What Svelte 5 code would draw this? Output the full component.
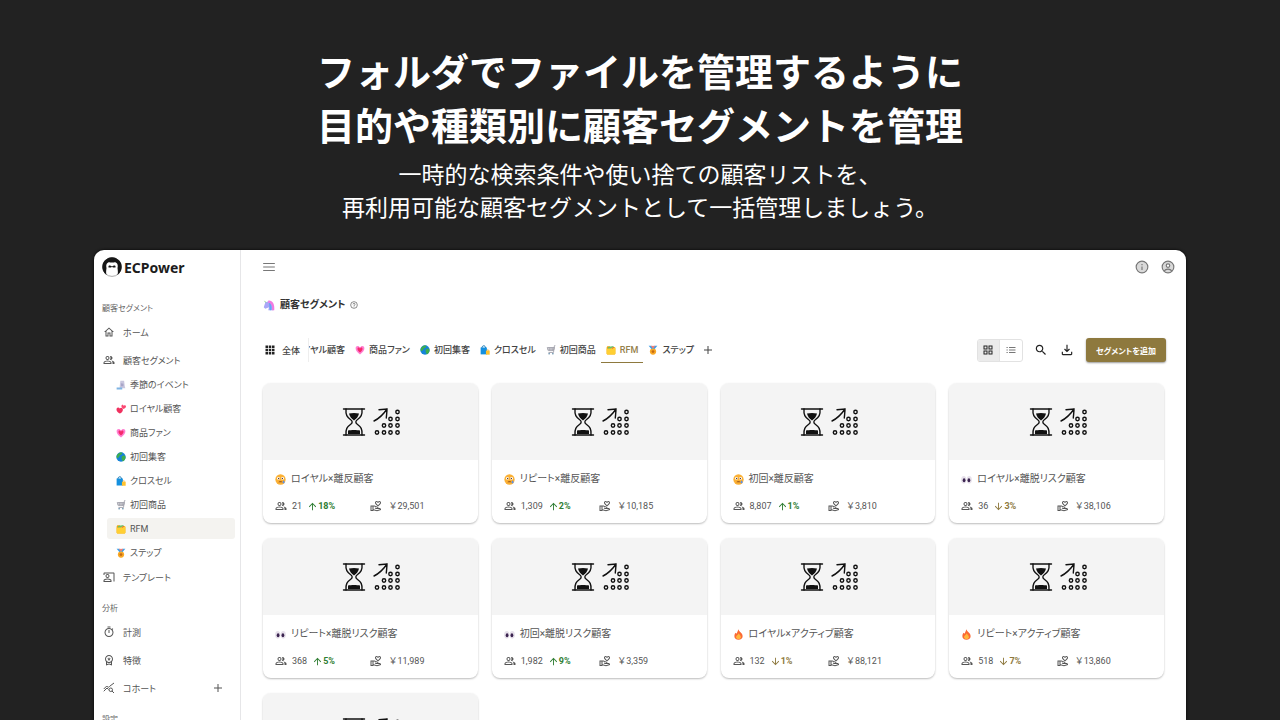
<script>
  const subs = [
    ['boot', '季節のイベント'],
    ['hearts', 'ロイヤル顧客'],
    ['heart', '商品ファン'],
    ['globe', '初回集客'],
    ['bags', 'クロスセル'],
    ['cart', '初回商品'],
    ['folder', 'RFM'],
    ['medal', 'ステップ'],
  ];
  const tabs = subs.slice(1);

  const cards = [
    { emoji: 'face', title: 'ロイヤル×離反顧客', count: '21', up: true, pct: '18%', value: '29,501' },
    { emoji: 'face', title: 'リピート×離反顧客', count: '1,309', up: true, pct: '2%', value: '10,185' },
    { emoji: 'face', title: '初回×離反顧客', count: '8,807', up: true, pct: '1%', value: '3,810' },
    { emoji: 'eyes', title: 'ロイヤル×離脱リスク顧客', count: '36', up: false, pct: '3%', value: '38,106' },
    { emoji: 'eyes', title: 'リピート×離脱リスク顧客', count: '368', up: true, pct: '5%', value: '11,989' },
    { emoji: 'eyes', title: '初回×離脱リスク顧客', count: '1,982', up: true, pct: '9%', value: '3,359' },
    { emoji: 'fire', title: 'ロイヤル×アクティブ顧客', count: '132', up: false, pct: '1%', value: '88,121' },
    { emoji: 'fire', title: 'リピート×アクティブ顧客', count: '518', up: false, pct: '7%', value: '13,860' },
    {},
  ];

  const dots = [
    [54.5, 4], [47.5, 11], [54.5, 11],
    [41, 17.5], [47.5, 17.5], [54.5, 17.5],
    [34, 24.5], [41, 24.5], [47.5, 24.5], [54.5, 24.5],
  ];

  const paths = {
    home: 'M12 3 2 12h3v9h6v-6h2v6h6v-9h3L12 3zm5 16h-2v-6H9v6H7v-8.8l5-4.5 5 4.5V19z',
    people: 'M16.67 13.13C18.04 14.06 19 15.32 19 17v3h4v-3c0-2.18-3.57-3.47-6.33-3.87zM15 12c2.21 0 4-1.79 4-4s-1.79-4-4-4c-.47 0-.91.1-1.33.24C14.5 5.27 15 6.58 15 8s-.5 2.73-1.33 3.76c.42.14.86.24 1.33.24zM9 12c2.21 0 4-1.79 4-4s-1.79-4-4-4-4 1.79-4 4 1.79 4 4 4zm0-6c1.1 0 2 .9 2 2s-.9 2-2 2-2-.9-2-2 .9-2 2-2zM9 13c-2.67 0-8 1.34-8 4v3h16v-3c0-2.66-5.33-4-8-4zm6 5H3v-.99C3.2 16.29 6.3 15 9 15s5.8 1.29 6 2v1z',
    present: 'M21 3H3c-1.100 0-2 .9-2 2v3h2V5h18v16h2V5c0-1.100-.9-2-2-2zM9 14c2.210 0 4-1.790 4-4s-1.790-4-4-4-4 1.790-4 4 1.790 4 4 4zm0-6c1.100 0 2 .9 2 2s-.9 2-2 2-2-.9-2-2 .9-2 2-2zm6.390 8.560C13.710 15.700 11.530 15 9 15s-4.710.7-6.390 1.560C1.610 17.070 1 18.100 1 19.220V22h16v-2.780c0-1.120-.61-2.150-1.610-2.660zM15 20H3v-.78c0-.38.2-.72.520-.88C4.710 17.730 6.630 17 9 17s4.290.73 5.480 1.340c.32.16.52.5.52.880V20z',
    timer: 'M9 1h6v2H9V1zm10.030 6.390 1.420-1.420c-.43-.51-.9-.99-1.410-1.410l-1.420 1.420C16.070 4.740 14.120 4 12 4c-4.970 0-9 4.030-9 9s4.020 9 9 9 9-4.030 9-9c0-2.120-.74-4.070-1.970-5.610zM12 20c-3.870 0-7-3.130-7-7s3.130-7 7-7 7 3.130 7 7-3.130 7-7 7zM11 14h2V8h-2v6z',
    premium: 'M9.680 13.690 12 11.930l2.310 1.760-.88-2.850L15.750 9h-2.840L12 6.190 11.090 9H8.250l2.310 1.840-.88 2.850zM20 10c0-4.420-3.580-8-8-8s-8 3.580-8 8c0 2.030.76 3.870 2 5.280V23l6-2 6 2v-7.720c1.240-1.410 2-3.250 2-5.280zm-8-6c3.310 0 6 2.690 6 6s-2.690 6-6 6-6-2.690-6-6 2.690-6 6-6zm0 15-4 1.020v-3.100c1.180.69 2.540 1.080 4 1.080s2.820-.39 4-1.080v3.100L12 19z',
    hand: 'M16 13c3.090-2.810 6-5.440 6-7.700C22 3.450 20.550 2 18.700 2c-1.040 0-2.050.49-2.700 1.250C15.340 2.490 14.340 2 13.300 2 11.450 2 10 3.450 10 5.300c0 2.260 2.910 4.890 6 7.700zm-2.700-9c.44 0 .89.21 1.180.55L16 6.340l1.520-1.790c.29-.34.74-.55 1.180-.55.74 0 1.300.56 1.300 1.300 0 1.120-2.040 3.170-4 4.990-1.960-1.820-4-3.880-4-4.990 0-.74.56-1.300 1.300-1.300zM19 16h-2c0-1.200-.75-2.280-1.870-2.700L8.970 11H1v11h6v-1.440l7 1.940 8-2.500v-1c0-1.660-1.340-3-3-3zM3 20v-7h2v7H3zm10.970.41L7 18.480V13h1.610l5.820 2.170c.34.13.57.46.57.83 0 0-1.990-.05-2.300-.15l-2.380-.79-.63 1.900 2.380.79c.51.17 1.040.26 1.580.26H19c.39 0 .74.23.9.56l-5.930 1.840z',
    apps: 'M3 3h5v5H3zM9.500 3h5v5h-5zM16 3h5v5h-5zM3 9.500h5v5H3zM9.500 9.500h5v5h-5zM16 9.500h5v5h-5zM3 16h5v5H3zM9.500 16h5v5h-5zM16 16h5v5h-5z',
    grid: 'M3 3v8h8V3H3zm6 6H5V5h4v4zm-6 4v8h8v-8H3zm6 6H5v-4h4v4zm4-16v8h8V3h-8zm6 6h-4V5h4v4zm-6 4v8h8v-8h-8zm6 6h-4v-4h4v4z',
    list: 'M3 6h2.500v2H3zM8 6h13v2H8zM3 11h2.500v2H3zM8 11h13v2H8zM3 16h2.500v2H3zM8 16h13v2H8z',
    search: 'M15.500 14h-.79l-.28-.27C15.410 12.590 16 11.110 16 9.500 16 5.910 13.090 3 9.500 3S3 5.910 3 9.500 5.910 16 9.500 16c1.610 0 3.090-.59 4.230-1.570l.27.28v.79l5 4.990L20.490 19l-4.990-5zm-6 0C7.010 14 5 11.990 5 9.500S7.010 5 9.500 5 14 7.010 14 9.500 11.990 14 9.500 14z',
    download: 'M19 15v4H5v-4H3v4c0 1.100.9 2 2 2h14c1.100 0 2-.9 2-2v-4h-2zM17 11l-1.410-1.410L13 12.170V3h-2v9.170L8.410 9.590 7 11l5 5 5-5z',
    up: 'm4 12 1.410 1.410L11 7.830V20h2V7.830l5.580 5.590L20 12l-8-8-8 8z',
    down: 'm20 12-1.410-1.410L13 16.170V4h-2v12.170l-5.580-5.590L4 12l8 8 8-8z',
    add: 'M20 13h-7v7h-2v-7H4v-2h7V4h2v7h7v2z',
    menu: 'M2 5h20v2H2zM2 11h20v2H2zM2 17h20v2H2z',
  };
</script>

{#snippet icon(name)}
  <svg class="icon" viewBox="0 0 24 24" aria-hidden="true"><path d={paths[name]} /></svg>
{/snippet}

{#snippet emoji(name)}
  <svg class="emoji" viewBox="0 0 16 16" aria-hidden="true">
    {#if name === 'boot'}
      <path d="M7 1h6l1 9 1 3H6V9z" fill="#c9c6de" />
      <path d="M8 5l4 1v4H8z" fill="#a9a5c8" />
      <path d="M1 12h9v3H1z" fill="#7fb4e3" />
    {:else if name === 'hearts'}
      <path d="M6 15C2 13 0 10 1 7c1-2 4-2 5 0 2-2 5-1 5 2 0 3-2 5-5 6z" fill="#f0315f" />
      <path d="M12 8C9 6 8 4 9 2c1-1 3-1 3 1 1-2 4-1 4 1 0 2-2 3-4 4z" fill="#fb4772" />
    {:else if name === 'heart'}
      <path d="M8 15C3 11 1 8 1 5c0-4 5-5 7-1 2-4 7-3 7 1 0 3-2 6-7 10z" fill="#ff7fd1" />
      <path d="M8 12C5 9.500 4 8 4 6c0-2 3-3 4 0 1-3 4-2 4 0 0 2-1 3.500-4 6z" fill="#f52a6a" />
    {:else if name === 'globe'}
      <circle cx="8" cy="8" r="7.500" fill="#1583d8" />
      <path d="M3 3c2-2 5-3 7-2l-1 3-3 1-1 3-3 2C0 8 1 5 3 3zM9 7l4-2 2 2c1 3-1 6-4 8l-2-4z" fill="#3fae4b" />
    {:else if name === 'bags'}
      <path d="M3 5c0-5 6-5 6 0" fill="none" stroke="#0a6fae" stroke-width="1.500" />
      <path d="M1 4h10v11H1z" fill="#1490df" />
      <path d="M9.500 9h6v6.500h-6z" fill="#ffc22e" />
      <path d="M11 9c0-2 3-2 3 0" fill="none" stroke="#e89a18" />
    {:else if name === 'cart'}
      <path d="M15 1h-1.500L12 12H4M2 4h11.500L12 9H3.500zM5 4l.5 5M8 4v5M11 4l-.5 5M2.500 6.500H13" fill="none" stroke="#9b9ba6" stroke-width="1.300" />
      <circle cx="5" cy="14" r="1.300" fill="#5b86a5" /><circle cx="11" cy="14" r="1.300" fill="#5b86a5" />
    {:else if name === 'folder'}
      <path d="M1 4l1-2h4l1 1h7l1 2v9l-1 1H2l-1-1z" fill="#f4a60f" />
      <path d="M3 3l9-1.500V6H3z" fill="#6bbf6a" />
      <path d="M1 6l7-.5L10 4h5v10l-1 1H2l-1-1z" fill="#ffcf33" />
      <path d="M9 5l3-2 1 1-3 2z" fill="#e8543a" />
    {:else if name === 'medal'}
      <path d="M1 1h4l4 6H6z" fill="#3fa0e8" /><path d="M15 1h-4L7 7h3z" fill="#3fa0e8" />
      <path d="M5 1h2l2 4-1 2zM11 1H9L7 5l1 2z" fill="#f0564a" />
      <circle cx="8" cy="10.500" r="5" fill="#f9a825" /><circle cx="8" cy="10.500" r="2.200" fill="#c46a12" />
    {:else if name === 'face'}
      <circle cx="8" cy="8" r="7.500" fill="#fbb034" />
      <circle cx="5" cy="6.500" r="2" fill="#fff" /><circle cx="11" cy="6.500" r="2" fill="#fff" />
      <circle cx="5.300" cy="6.500" r="1" fill="#5a3b2a" /><circle cx="10.700" cy="6.500" r="1" fill="#5a3b2a" />
      <path d="M5 12c1-2 5-2 6 0z" fill="#8a4a1c" />
      <path d="M12.500 9c2 3 2 4.500 0 4.500s-2-1.500 0-4.500z" fill="#5a8fe8" />
    {:else if name === 'eyes'}
      <ellipse cx="4" cy="8.500" rx="3.800" ry="5.500" fill="#e6e0ea" /><ellipse cx="12" cy="8.500" rx="3.800" ry="5.500" fill="#e6e0ea" />
      <ellipse cx="4.500" cy="9" rx="2" ry="3" fill="#3b2450" /><ellipse cx="11.500" cy="9" rx="2" ry="3" fill="#3b2450" />
    {:else if name === 'fire'}
      <path d="M7.500.5C9 4 14 6 14 10.500c0 3-2.500 5-6 5s-6-2-6-5c0-2.500 1-4 2-5l1 1.500C6 5 7.500 3 7.500.5z" fill="#fb6a35" />
      <path d="M8.500 6c.5 2 3 3 3 5.500 0 2-1.500 3-3.500 3s-3.500-1-3.500-3C4.500 9 7.500 8.500 8.500 6z" fill="#ffb83d" />
    {:else if name === 'unicorn'}
      <path d="M1 2l5 3-2 1z" fill="#7fd08a" />
      <path d="M3 5c5-4 9-2 10 3l1 7H7l1-4-5 2-2-2z" fill="#a9a6f7" />
      <path d="M7 2c5-1 9 4 8 13h-3c1-5-1-9-5-10z" fill="#f27be0" />
      <path d="M8 5c3 1 4 5 3 10H9z" fill="#63a5f5" />
    {/if}
  </svg>
{/snippet}

{#snippet change(card)}
  <span class="change" class:down={!card.up}>{@render icon(card.up ? 'up' : 'down')}{card.pct}</span>
{/snippet}

<main class="stage">
  <header class="hero">
    <h1>フォルダでファイルを管理するように<br />目的や種類別に顧客セグメントを管理</h1>
    <p>一時的な検索条件や使い捨ての顧客リストを、<br />再利用可能な顧客セグメントとして一括管理しましょう。</p>
  </header>

  <section class="window">
    <nav class="sidebar">
      <div class="brand">
        <svg class="mark" viewBox="0 0 20 20" aria-hidden="true">
          <circle cx="10" cy="10" r="9.400" fill="#fff" stroke="#888" stroke-width=".7" />
          <path fill-rule="evenodd" d="M5.500 18.500A9.700 9.700 0 1 1 14.500 18.500c1.800-.8 1.500-4 1-7.500.5-2 .3-4-1-5-1-1.200-2-.3-3-.5h-3C7.500 5.700 6.500 4.800 5.500 6c-1.300 1-1.500 3-1 5-.5 3.500-.8 6.700 1 7.500z" fill="#161616" />
          <path d="M6.500 9c1-.8 2.200-.6 3 .2h1c.8-.8 2-1 3-.2v1.500h-2.500l-1-.8-1 .8H6.500z" fill="#161616" />
        </svg>
        <span>ECPower</span>
      </div>

      <h2 class="label">顧客セグメント</h2>
      <a class="row" href="#home">{@render icon('home')}ホーム</a>
      <a class="row" href="#segments">{@render icon('people')}顧客セグメント</a>
      <div class="subs">
        {#each subs as [name, text]}
          <a class="sub" class:active={text === 'RFM'} href="#segments">{@render emoji(name)}{text}</a>
        {/each}
      </div>
      <a class="row" href="#templates">{@render icon('present')}テンプレート</a>

      <h2 class="label spaced">分析</h2>
      <a class="row" href="#measure">{@render icon('timer')}計測</a>
      <a class="row" href="#traits">{@render icon('premium')}特徴</a>
      <a class="row" href="#cohort">
        <svg class="icon" viewBox="0 0 24 24" aria-hidden="true">
          <g fill="none" stroke="currentColor" stroke-width="2">
            <path d="M1.500 18.500 8 12l3 3M14 8l8-6M1.500 14l6-6 3 3 3-3" />
            <circle cx="15.500" cy="15.500" r="3.500" /><path d="m18 18 4 4" />
          </g>
        </svg>コホート<span class="push">{@render icon('add')}</span>
      </a>
      <h2 class="label spaced">設定</h2>
    </nav>

    <div class="content">
      <div class="topbar">
        <button class="plain" aria-label="メニュー">{@render icon('menu')}</button>
        <div class="account">
          <button class="plain" aria-label="情報">
            <svg class="icon" viewBox="0 0 24 24"><circle cx="12" cy="12" r="10" fill="#d9d9d9" stroke="currentColor" stroke-width="2" /><path d="M11 7h2v2h-2zM11 11h2v6h-2z" /></svg>
          </button>
          <button class="plain" aria-label="アカウント">
            <svg class="icon" viewBox="0 0 24 24"><g fill="#d9d9d9" stroke="currentColor" stroke-width="2"><circle cx="12" cy="12" r="10" /><circle cx="12" cy="9.500" r="3" fill="#fff" /><path d="M5.500 18.500c3-4 10-4 13 0" fill="none" /></g></svg>
          </button>
        </div>
      </div>

      <div class="heading">
        {@render emoji('unicorn')}
        <h2>顧客セグメント</h2>
        <svg class="help" viewBox="0 0 24 24" aria-hidden="true"><g fill="none" stroke="currentColor" stroke-width="2"><circle cx="12" cy="12" r="10" /><path d="M9 10c0-4 6-4 6 0 0 2-3 2-3 5M12 16.500v2" /></g></svg>
      </div>

      <div class="toolbar">
        <button class="all">{@render icon('apps')}全体</button>
        <div class="tabs">
          {#each tabs as [name, text]}
            <button class="tab" class:active={text === 'RFM'}>{@render emoji(name)}{text}</button>
          {/each}
        </div>
        <button class="plain" aria-label="追加">{@render icon('add')}</button>

        <div class="actions">
          <div class="toggle">
            <button class="on" aria-label="グリッド">{@render icon('grid')}</button>
            <button aria-label="リスト">{@render icon('list')}</button>
          </div>
          <button class="plain dark" aria-label="検索">{@render icon('search')}</button>
          <button class="plain dark" aria-label="ダウンロード">{@render icon('download')}</button>
          <button class="primary">セグメントを追加</button>
        </div>
      </div>

      <div class="cards">
        {#each cards as card}
          <article class="card">
            <div class="cover">
              <svg viewBox="0 0 56 28" aria-hidden="true">
                <g fill="none" stroke="#111" stroke-width="1.400" stroke-linecap="round">
                  <path d="M.5 1h21M.5 27h21" />
                  <path d="M3 1c-.5 6 1 8 5 11 1.500 1 1.500 3 0 4-4 3-5.500 5-5 11M19 1c.5 6-1 8-5 11-1.500 1-1.500 3 0 4 4 3 5.500 5 5 11" />
                  <path d="M31 13c4-2 9-6 13-12M36 1.800 44 1c0 3-.5 6-.7 9" />
                  {#each dots as [x, y]}<circle cx={x} cy={y} r="1.700" />{/each}
                </g>
                <path d="M6 5.500c3-.8 7-.8 10 0-.5 3-2.500 5-5 7C8.500 10.500 6.500 8.500 6 5.500zM5 22.500c3-.8 9-.8 12 0V26H5z" fill="#111" />
              </svg>
            </div>
            {#if card.title}
              <div class="body">
                <h3>{@render emoji(card.emoji)}{card.title}</h3>
                <div class="stats">
                  <span class="stat">{@render icon('people')}{card.count}{@render change(card)}</span>
                  <span class="stat money">{@render icon('hand')}<span>￥{card.value}</span></span>
                </div>
              </div>
            {/if}
          </article>
        {/each}
      </div>
    </div>
  </section>
</main>

<style>
  :global(body) { margin: 0; background: #222; }
  * { box-sizing: border-box; }
  h1, h2, h3, p { margin: 0; }
  button { border: 0; padding: 0; background: none; color: inherit; font: inherit; font-feature-settings: inherit; cursor: pointer; }
  a { color: inherit; text-decoration: none; }
  .stage {
    display: flex;
    flex-direction: column;
    height: 100vh;
    overflow: hidden;
    background: #222;
    font-family: Roboto, "Noto Sans CJK JP", sans-serif;
  }
  .hero { flex: none; padding-top: 43px; height: 250px; color: #fff; text-align: center; font-family: "Noto Sans CJK JP", sans-serif; }
  h1 { font-size: 38px; line-height: 54px; font-weight: 700; }
  .hero p { margin-top: 6px; font-size: 23px; line-height: 33px; font-weight: 400; }

  .window {
    flex: 1;
    min-height: 0;
    display: flex;
    margin: 0 94px;
    overflow: hidden;
    border-radius: 10px 10px 0 0;
    background: #fff;
    box-shadow: 0 0 3px #000;
    color: #555;
    font-size: 9px;
    font-feature-settings: "palt";
  }
  .icon { flex: none; width: 12px; height: 12px; fill: currentColor; }
  .emoji { flex: none; width: 10px; height: 10px; }

  .sidebar { flex: none; width: 147px; border-right: 1px solid #e6e6e8; }
  .brand { display: flex; align-items: center; gap: 2px; height: 34px; margin-bottom: 17px; padding-left: 8px; color: #1c1c1c; font: 700 14px "Noto Sans", sans-serif; }
  .mark { width: 20px; height: 20px; }
  .label { margin-bottom: 1px; padding-left: 8px; font-size: 8px; line-height: 16px; font-weight: 400; color: #666; }
  .label.spaced { margin-top: 10px; }
  .row { display: flex; align-items: center; gap: 8px; height: 28px; padding: 0 16px 0 9px; }
  .push { display: flex; margin-left: auto; }
  .subs { display: flex; flex-direction: column; gap: 3px; padding: 0 5px 0 13px; }
  .sub { display: flex; align-items: center; gap: 4px; height: 21px; padding-left: 9px; border-radius: 3px; }
  .sub.active { background: #f4f3f0; }

  .content { flex: 1; min-width: 0; padding: 0 22px; }
  .topbar { display: flex; align-items: center; justify-content: space-between; height: 34px; margin: 0 -11px 0 -1px; color: #777; }
  .topbar .icon { width: 14px; height: 14px; }
  .plain { display: flex; }
  .account { display: flex; gap: 12px; }
  .heading { display: flex; align-items: center; gap: 5px; height: 41px; color: #333; }
  .heading .emoji { width: 12px; height: 12px; }
  .heading h2 { font-size: 10px; line-height: 16px; font-weight: 700; }
  .help { width: 8px; height: 8px; color: #555; }

  .toolbar { display: flex; align-items: center; height: 24px; margin: 13px -2px 21px 0; font-weight: 500; color: #444; }
  .all { flex: none; display: flex; align-items: center; gap: 6px; width: 46px; height: 24px; padding-left: 1px; border-right: 1px solid #eee; }
  .all .icon { color: #222; }
  .tabs { display: flex; justify-content: flex-end; width: 390px; margin-right: 3px; overflow: hidden; }
  .tab { flex: none; display: flex; align-items: center; gap: 4px; height: 25px; padding: 0 5px; border-bottom: 1px solid transparent; }
  .tab.active { color: #94804a; border-color: #8e793e; }
  .actions { display: flex; align-items: center; gap: 12px; margin-left: auto; }
  .toggle { display: flex; margin-right: -1px; border: 1px solid #e2e2e2; border-radius: 3px; overflow: hidden; }
  .toggle button { display: flex; align-items: center; justify-content: center; width: 22px; height: 21px; color: #777; }
  .toggle .on { background: #ebebeb; color: #222; border-right: 1px solid #e2e2e2; }
  .dark { color: #222; }
  .actions > .plain .icon { width: 14px; height: 14px; }
  .primary { height: 24px; padding: 0 10px; border-radius: 3px; background: #8e793e; color: #fff; font-size: 8px; font-weight: 700; box-shadow: 0 1px 2px #0006; }

  .cards { display: grid; grid-template-columns: repeat(4, 1fr); gap: 15px 14px; }
  .card { height: 140px; overflow: hidden; border-radius: 8px; box-shadow: 0 1px 2px #0004; background: #fff; }
  .cover { display: flex; align-items: center; justify-content: center; height: 77px; padding-left: 2px; background: #f4f4f4; }
  .cover svg { width: 56px; height: 28px; overflow: visible; }
  .body { padding: 11px 12px; }
  h3 { display: flex; align-items: center; gap: 5px; font-size: 10px; line-height: 16px; font-weight: 400; }
  h3 .emoji { width: 11px; height: 11px; }
  .stats { display: grid; grid-template-columns: 1fr 1fr; margin-top: 11px; }
  .stat { display: flex; align-items: center; gap: 5px; line-height: 16px; }
  .money { gap: 6px; font-feature-settings: normal; }
  .change { display: flex; align-items: center; color: #2e7d32; font-weight: 700; }
  .change .icon { width: 11px; height: 11px; }
  .change.down { color: #8e793e; }
</style>
